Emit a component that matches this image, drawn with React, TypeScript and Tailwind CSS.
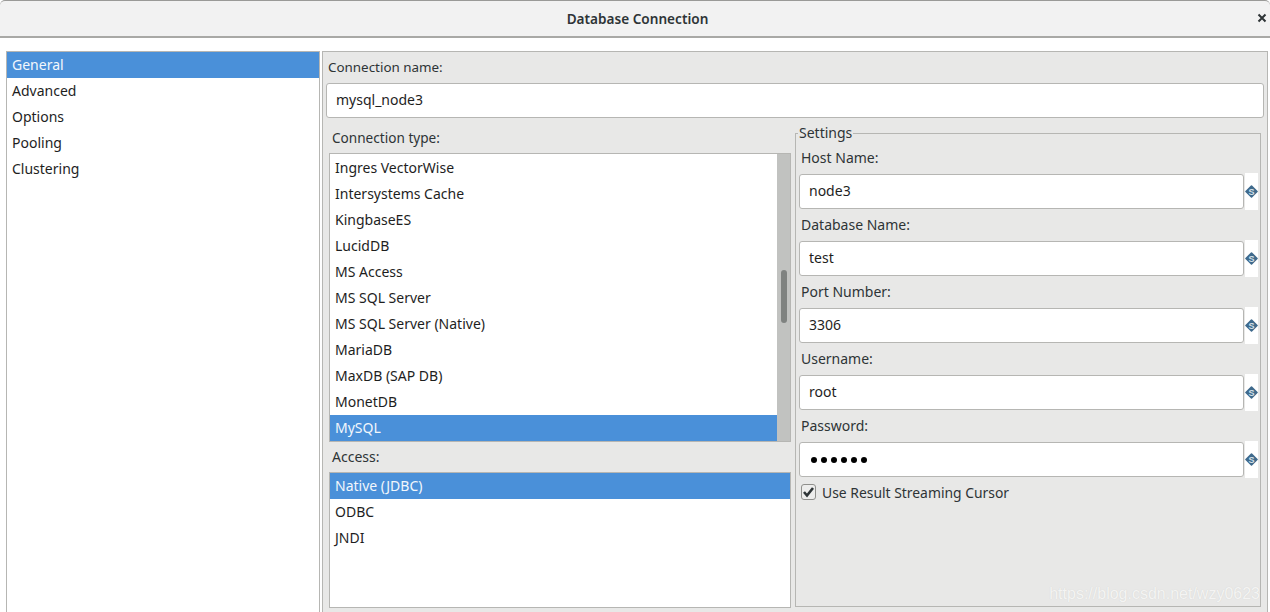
import React from 'react';

const navItems = ['General', 'Advanced', 'Options', 'Pooling', 'Clustering'];
const connectionTypes = [
  'Ingres VectorWise',
  'Intersystems Cache',
  'KingbaseES',
  'LucidDB',
  'MS Access',
  'MS SQL Server',
  'MS SQL Server (Native)',
  'MariaDB',
  'MaxDB (SAP DB)',
  'MonetDB',
  'MySQL',
];
const accessTypes = ['Native (JDBC)', 'ODBC', 'JNDI'];
const fields = [
  { label: 'Host Name:', value: 'node3' },
  { label: 'Database Name:', value: 'test' },
  { label: 'Port Number:', value: '3306' },
  { label: 'Username:', value: 'root' },
  { label: 'Password:', value: '••••••', password: true },
];

const VarIcon = () => (
  <div className="flex h-[37px] w-[13px] items-center justify-center bg-white">
    <svg width="13" height="13" viewBox="0 0 13 13" className="shrink-0">
      <rect x="1.8" y="1.8" width="9.4" height="9.4" transform="rotate(45 6.5 6.5)" fill="#3f6a8c" rx="0.8" />
      <text x="6.5" y="9.6" textAnchor="middle" fontSize="9" fontWeight="700" fill="#d5e0e8" fontFamily="Liberation Sans, sans-serif">
        S
      </text>
    </svg>
  </div>
);

const ListRow: React.FC<{ text: string; selected?: boolean }> = ({ text, selected }) => (
  <div className={`flex h-[26px] items-center pb-[2px] pl-[5px] ${selected ? 'bg-[#4a90d9] text-[#f2f7fc]' : 'text-[#1e1e1e]'}`}>
    {text}
  </div>
);

const App: React.FC = () => {
  return (
    <div
      className="relative flex h-[612px] w-[1270px] flex-col overflow-hidden bg-white text-[14px] text-[#2e3436]"
      style={{ fontFamily: '"Noto Sans", sans-serif' }}
    >
      {/* title bar */}
      <div className="flex h-[38px] shrink-0 items-center justify-center rounded-t-[5px] border-t border-b-2 border-t-[#9a9a98] border-b-[#a9a9a6] bg-[#f2f2f2] pl-[5px] pt-[2px]">
        <span className="text-[13.6px] font-semibold text-[#2e3436]">Database Connection</span>
        <svg className="absolute right-[3px] top-[13px]" width="10" height="10" viewBox="0 0 10 10">
          <path d="M1.5 1.5 L8.5 8.5 M8.5 1.5 L1.5 8.5" stroke="#2e3436" strokeWidth="2" />
        </svg>
      </div>

      <div className="flex min-h-0 flex-1 pl-[6px] pt-[13px]">
        {/* left nav */}
        <div className="-mb-[10px] w-[314px] shrink-0 border border-[#b6b6b3] bg-white">
          {navItems.map((item, i) => (
            <ListRow key={item} text={item} selected={i === 0} />
          ))}
        </div>

        {/* right panel */}
        <div className="-mb-[10px] ml-[2px] flex w-[946px] shrink-0 flex-col border border-[#b6b6b3] bg-[#e8e8e7] pl-[3px] pr-[3px]">
          <div className="ml-[2px] mt-[4px] text-[13.4px] leading-[22px]">Connection name:</div>
          <div className="mt-[5px] flex h-[35px] items-center rounded-[3px] border border-[#b6b6b3] bg-white pb-[2px] pl-[9px] text-[#1e1e1e]">
            mysql_node3
          </div>

          <div className="mt-[14px] flex">
            {/* connection type + access */}
            <div className="ml-[3px] w-[462px] shrink-0">
              <div className="ml-[3px] mt-[-5px] text-[13.6px] leading-[22px]">Connection type:</div>
              <div className="mt-[4px] flex h-[289px] border border-[#b6b6b3] bg-white pt-[1px]">
                <div className="flex-1">
                  {connectionTypes.map((t) => (
                    <ListRow key={t} text={t} selected={t === 'MySQL'} />
                  ))}
                </div>
                <div className="-mt-[1px] w-[13px] bg-[#c1c2c0] pt-[116px]">
                  <div className="ml-[4px] h-[53px] w-[6px] rounded-[3px] bg-[#7f8280]" />
                </div>
              </div>
              <div className="ml-[3px] mt-[4px] leading-[22px]">Access:</div>
              <div className="mt-[4px] h-[136px] border border-[#b6b6b3] bg-white">
                {accessTypes.map((t, i) => (
                  <ListRow key={t} text={t} selected={i === 0} />
                ))}
              </div>
            </div>

            {/* settings */}
            <fieldset className="mt-[1px] ml-[4px] h-[474px] w-[466px] border border-[#b6b6b3] pl-[3px]">
              <legend className="relative -top-[1px] -ml-[1px] px-[1px] leading-[0px]">Settings</legend>
              <div className="mt-[8px] flex flex-col">
                {fields.map((f) => (
                  <div key={f.label} className="mb-[4.5px] h-[62.5px]">
                    <div className="ml-[2px] pt-[5px] leading-[22px]">{f.label}</div>
                    <div className="mt-[4px] flex items-center">
                      <div className="flex h-[35px] w-[445px] items-center rounded-[3px] border border-[#b6b6b3] bg-white pb-[2px] pl-[9px] text-[#1e1e1e]">
                        {f.password ? (
                          <div className="flex gap-[4px] pl-[2px] pt-[2px]">
                            {[0, 1, 2, 3, 4, 5].map((d) => (
                              <span key={d} className="h-[6px] w-[6px] rounded-full bg-black" />
                            ))}
                          </div>
                        ) : (
                          f.value
                        )}
                      </div>
                      <div className="ml-[1px]">
                        <VarIcon />
                      </div>
                    </div>
                  </div>
                ))}
                <div className="ml-[2px] mt-[4px] flex items-center">
                  <div className="flex h-[16px] w-[15px] items-center justify-center rounded-[3px] border border-[#8f8f8c] bg-[#ededec]">
                    <svg width="13" height="12" viewBox="0 0 13 12">
                      <path d="M2 6 L5 9.5 L11 2" fill="none" stroke="#2e3436" strokeWidth="2.6" />
                    </svg>
                  </div>
                  <span className="ml-[6px] pt-[2px] text-[13.9px]">Use Result Streaming Cursor</span>
                </div>
              </div>
            </fieldset>
          </div>
        </div>
      </div>

      {/* watermark */}
      <div
        className="absolute bottom-[8px] right-[10px] text-[16px] leading-[20px] text-[#f4f4f3]"
        style={{ fontFamily: '"Liberation Sans", sans-serif', textShadow: '0 0 1px #d0d0ce' }}
      >
        https://blog.csdn.net/wzy0623
      </div>
    </div>
  );
};

export default App;
